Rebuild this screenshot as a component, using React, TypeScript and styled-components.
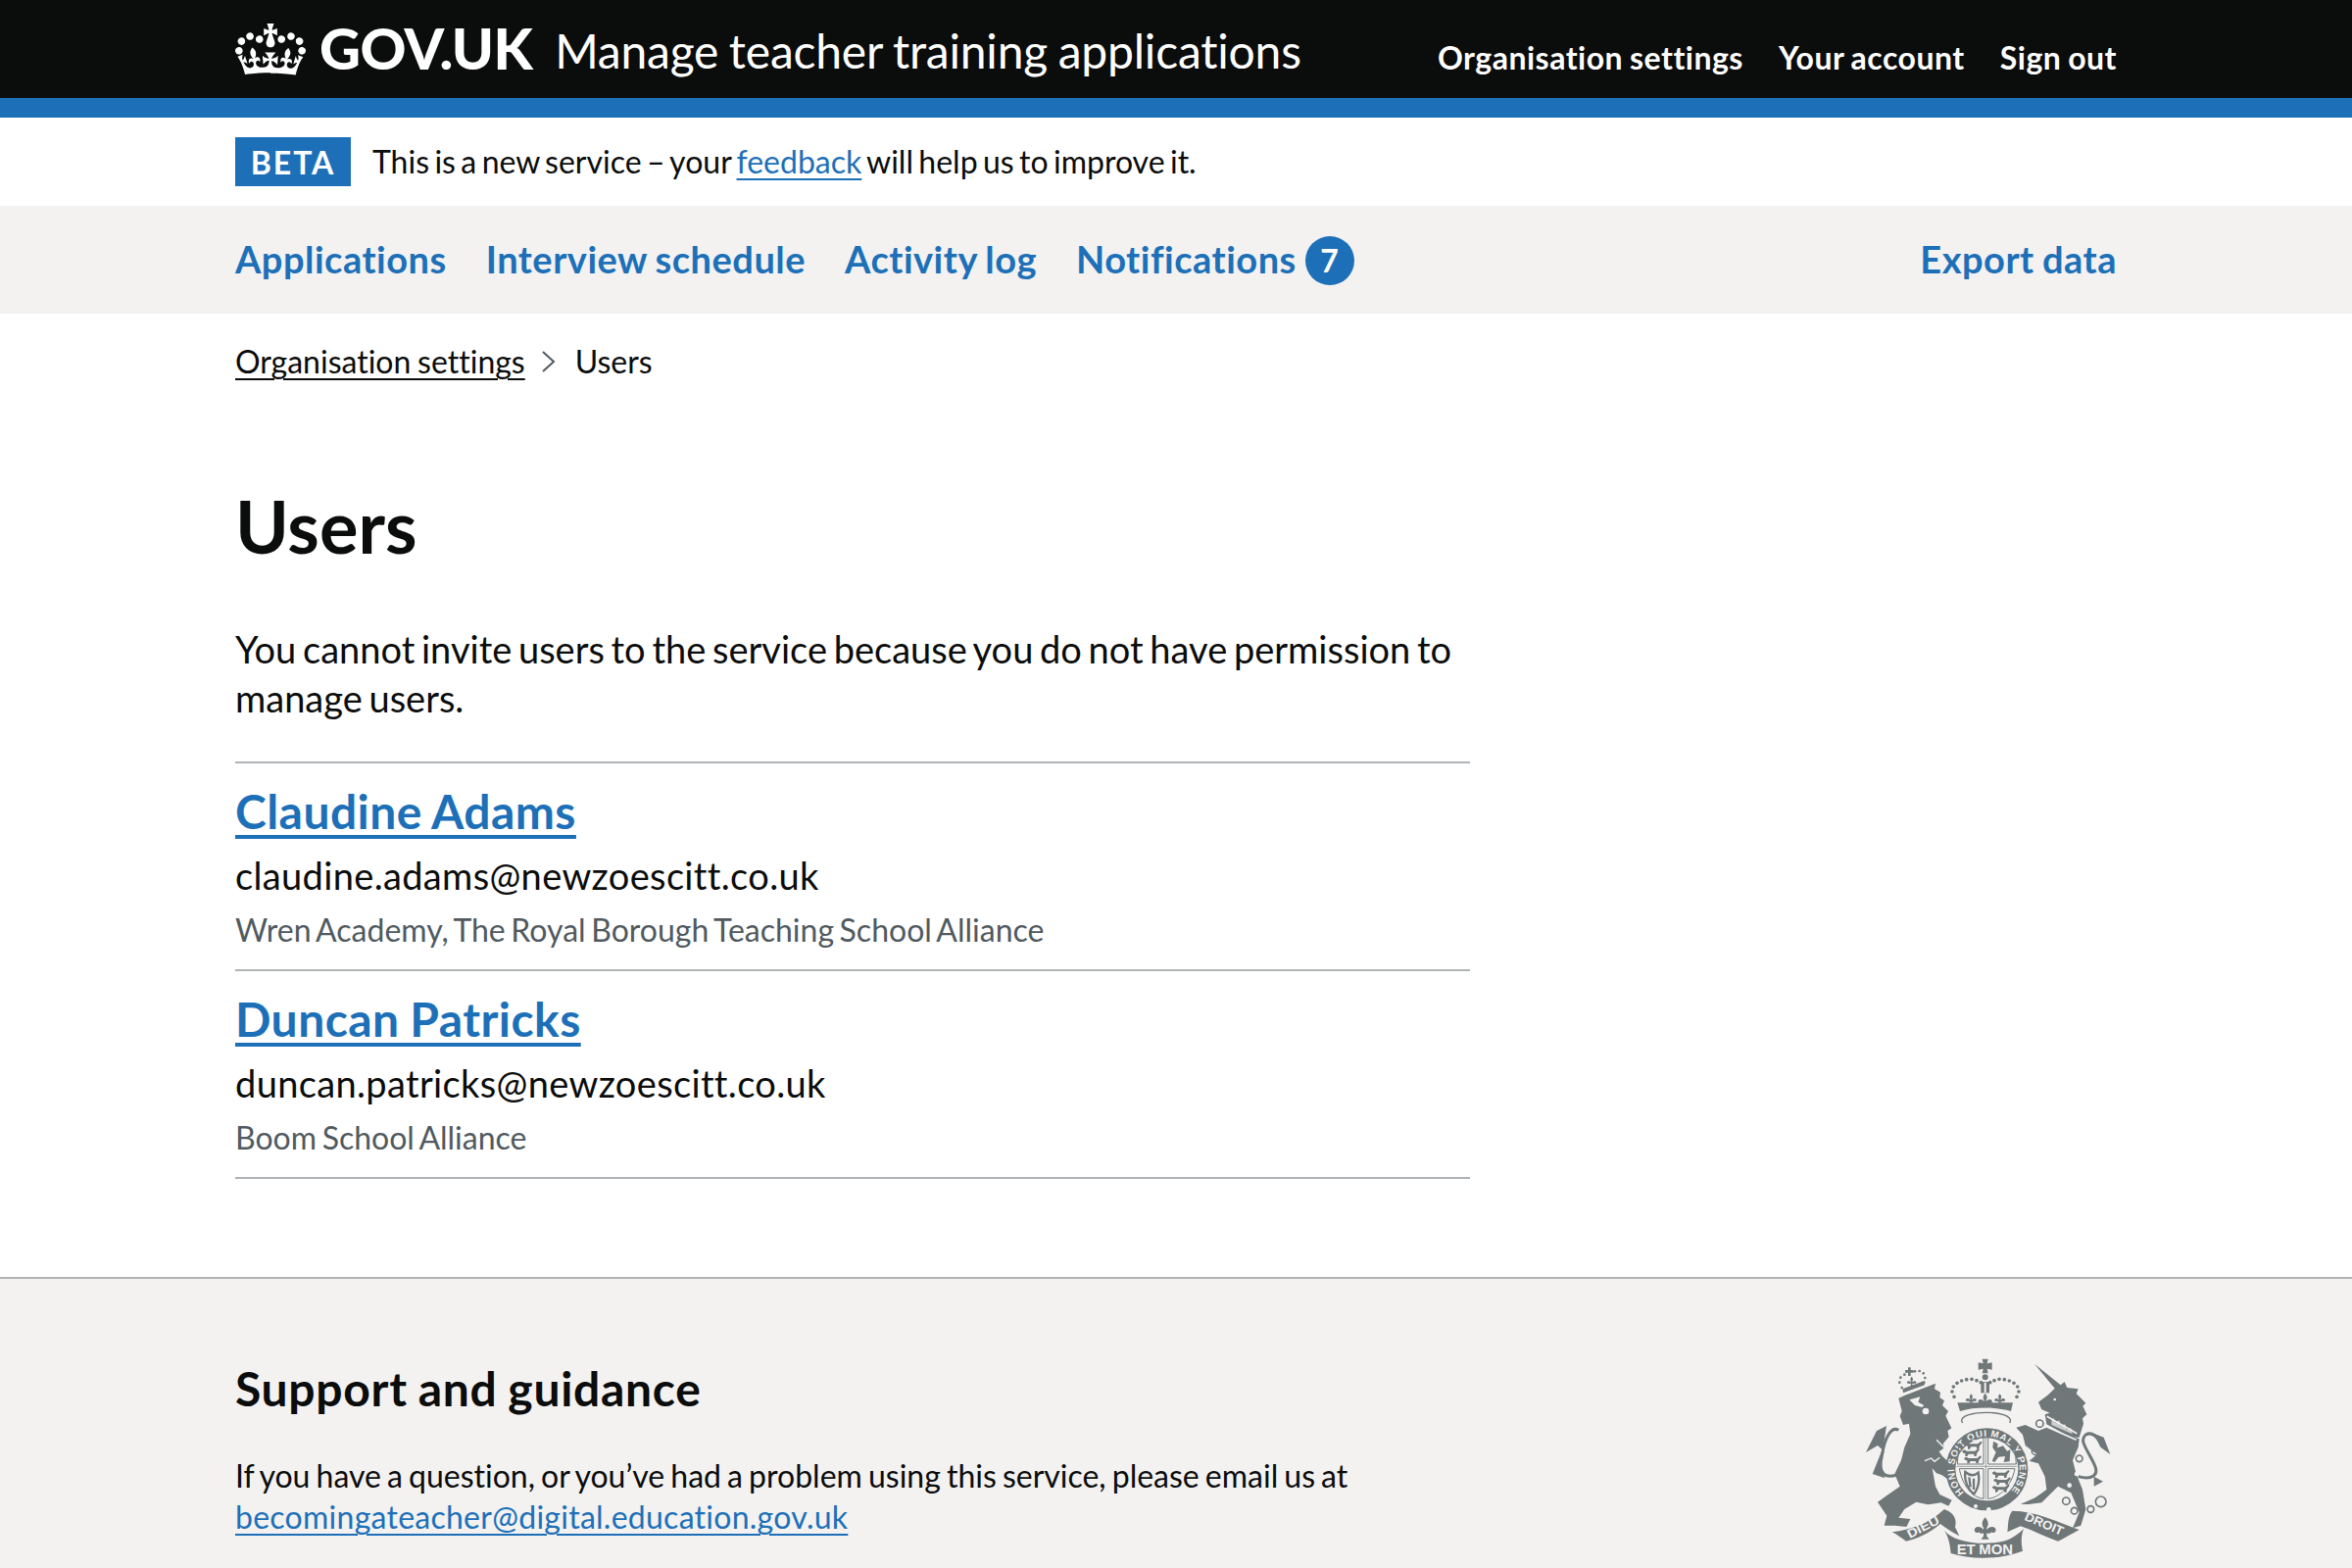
import React, { ReactElement } from 'react'
import styled, { createGlobalStyle } from 'styled-components';

const GlobalStyle = createGlobalStyle`
    html, body {
        margin : 0;
        padding : 0;
        background : white;
        color : #0b0c0c;
        font-family : Lato, "Liberation Sans", sans-serif;
        font-variant-ligatures : none;
        word-spacing : -1.44px;
    }
`;

const Page = styled.div`
    width : 2400px;
    height : 1600px;
    overflow : hidden;
`;

const Header = styled.header`
    display : flex;
    align-items : center;
    height : 100px;
    padding : 0 240px;
    background : #0b0c0c;
    border-bottom : 20px solid #1d70b8;
    color : white;
`;

const CrownIcon = styled.svg`
    width : 72px;
    height : 53px;
    fill : white;
    margin-right : 14px;
`;

const LogoText = styled.span`
    font-size : 58px;
    font-weight : 900;
    letter-spacing : -0.6px;
    margin-right : 23px;
    margin-bottom : 3px;
`;

const ServiceName = styled.span`
    flex : 1;
    padding-top : 3px;
    font-size : 48px;
    letter-spacing : -0.2px;
`;

const HeaderNav = styled.nav`
    display : flex;
    gap : 36px;
    padding-top : 16px;
`;

const HeaderLink = styled.a`
    font-size : 32px;
    font-weight : 700;
    letter-spacing : 0.5px;
`;

const PhaseBanner = styled.div`
    display : flex;
    align-items : center;
    gap : 22px;
    height : 90px;
    padding : 0 240px;
    font-size : 32px;
`;

const BannerText = styled.span`
    margin-top : -2px;
    word-spacing : -2.8px;
`;

const Tag = styled.strong`
    display : flex;
    align-items : center;
    justify-content : center;
    width : 118px;
    height : 50px;
    background : #1d70b8;
    color : white;
    font-size : 32px;
    letter-spacing : 2px;
`;

const BlueLink = styled.a`
    color : #1d70b8;
    text-decoration : underline;
    text-decoration-thickness : 2px;
    text-underline-offset : 5px;
`;

const FooterLink = styled(BlueLink)`
    display : block;
    margin-top : 2px;
    letter-spacing : 0.26px;
`;

const PrimaryNav = styled.nav`
    display : flex;
    align-items : center;
    gap : 40px;
    box-sizing : border-box;
    height : 110px;
    padding : 0 240px 3px;
    background : #f3f2f1;
`;

const NavLink = styled.a<{ $end? : boolean }>`
    display : flex;
    align-items : center;
    gap : 9px;
    color : #1d70b8;
    font-size : 38px;
    font-weight : 700;
    letter-spacing : 0.5px;
    margin-left : ${p => p.$end ? 'auto' : '0'};
`;

const Badge = styled.span`
    display : flex;
    align-items : center;
    justify-content : center;
    width : 50px;
    height : 50px;
    border-radius : 50%;
    background : #1d70b8;
    color : white;
    font-size : 32px;
    transform : translateY(2px);
`;

const Breadcrumbs = styled.div`
    display : flex;
    align-items : center;
    margin : 29px 240px 0;
    font-size : 32px;
    line-height : 40px;
`;

const CrumbLink = styled.a`
    text-decoration : underline;
    text-decoration-thickness : 2px;
    text-underline-offset : 5px;
`;

const Chevron = styled.svg`
    width : 16px;
    height : 26px;
    margin : 0 19px 0 16px;
    fill : none;
    stroke : #505a5f;
    stroke-width : 2;
`;

const Main = styled.main`
    width : 1260px;
    margin : 0 240px;
`;

const Title = styled.h1`
    margin : 108px 0 60px;
    font-size : 74px;
    line-height : 80px;
    font-weight : 700;
`;

const Lead = styled.p`
    margin : 0 0 40px;
    font-size : 38px;
    line-height : 50px;
    word-spacing : -3px;
`;

const UserList = styled.ul`
    margin : 0;
    padding : 0;
    list-style : none;
    border-top : 2px solid #b1b4b6;
`;

const UserRow = styled.li`
    padding : 19px 0 20px;
    border-bottom : 2px solid #b1b4b6;
`;

const UserName = styled.a`
    display : block;
    color : #1d70b8;
    font-size : 48px;
    line-height : 60px;
    font-weight : 700;
    letter-spacing : 0.45px;
    text-decoration : underline;
    text-decoration-thickness : 4px;
    text-underline-offset : 6px;
`;

const UserEmail = styled.div`
    margin-top : 10px;
    font-size : 38px;
    line-height : 50px;
    letter-spacing : 0.35px;
`;

const UserOrg = styled.div`
    margin-top : 11px;
    color : #505a5f;
    font-size : 32px;
    line-height : 40px;
    word-spacing : -2.6px;
`;

const Footer = styled.footer`
    display : flex;
    justify-content : space-between;
    align-items : flex-start;
    margin-top : 100px;
    padding : 55px 220px 0 240px;
    background : #f3f2f1;
    border-top : 2px solid #b1b4b6;
    height : 300px;
`;

const FooterCopy = styled.div`
    padding-top : 27px;
    font-size : 32px;
    line-height : 40px;
`;

const FooterHeading = styled.h2`
    margin : 0 0 39px;
    font-size : 48px;
    line-height : 60px;
    font-weight : 700;
    letter-spacing : 0.7px;
`;

const FooterText = styled.p`
    margin : 0;
    word-spacing : -2.1px;
`;

const ArmsSvg = styled.svg`
    flex : none;
    width : 300px;
    height : 240px;
`;

function Crown() : ReactElement {
    return (
        <CrownIcon viewBox="0 0 132 97" aria-hidden="true">
            <path d="M25 30.2c3.5 1.5 7.7-.2 9.1-3.7 1.5-3.6-.2-7.8-3.9-9.2-3.6-1.4-7.6.3-9.1 3.9-1.4 3.5.3 7.5 3.9 9zM9 39.5c3.6 1.5 7.8-.2 9.2-3.7 1.5-3.6-.2-7.8-3.9-9.1-3.6-1.5-7.6.2-9.1 3.8-1.4 3.5.3 7.5 3.8 9zM4.4 57.2c3.5 1.5 7.7-.2 9.1-3.8 1.5-3.6-.2-7.7-3.9-9.1-3.6-1.5-7.6.3-9.1 3.8-1.4 3.5.3 7.6 3.9 9.1zm38.3-21.4c3.5 1.5 7.7-.2 9.1-3.8 1.5-3.6-.2-7.7-3.9-9.1-3.6-1.4-7.6.3-9.1 3.9-1.3 3.6.4 7.7 3.9 9zm64.4-5.6c-3.6 1.5-7.8-.2-9.1-3.7-1.5-3.6.2-7.8 3.8-9.2 3.6-1.4 7.7.3 9.2 3.9 1.3 3.5-.4 7.5-3.9 9zm15.9 9.3c-3.6 1.5-7.7-.2-9.1-3.7-1.5-3.6.2-7.8 3.7-9.1 3.6-1.5 7.7.2 9.2 3.8 1.5 3.5-.3 7.5-3.8 9zm4.7 17.7c-3.6 1.5-7.8-.2-9.2-3.8-1.5-3.6.2-7.7 3.9-9.1 3.6-1.5 7.7.3 9.2 3.8 1.3 3.5-.4 7.6-3.9 9.1zM89.3 35.8c-3.6 1.5-7.8-.2-9.2-3.8-1.4-3.6.2-7.7 3.9-9.1 3.6-1.4 7.7.3 9.2 3.9 1.4 3.6-.3 7.7-3.9 9zM69.7 17.7l8.9 4.7V9.3l-8.9 2.8c-.2-.3-.5-.6-.9-.9L72.4 0H59.6l3.6 11.2c-.3.3-.6.5-.9.9l-8.8-2.8v13.1l8.8-4.7c.3.3.6.7.9.9l-5 15.4v.1c-.2.8-.4 1.6-.4 2.4 0 4.1 3.1 7.5 7 8.1h.2c.3 0 .7.1 1 .1.4 0 .7 0 1-.1h.2c4-.6 7.1-4.1 7.1-8.1 0-.8-.1-1.7-.4-2.4V34l-5.1-15.4c.4-.2.7-.6 1-.9zM66 92.8c16.9 0 32.8 1.1 47.1 3.2 4-16.9 8.9-26.7 14-33.5l-9.6-3.4c1 4.9 1.1 7.2 0 10.2-1.5-1.4-3-4.3-4.2-8.7L108.6 76c2.8-2 5-3.2 7.5-3.3-4.4 9.4-10 11.9-13.6 11.2-4.3-.8-6.3-4.6-5.6-7.9 1-4.7 5.7-5.9 8-.5 4.3-8.7-3-11.4-7.6-8.8 7.1-7.2 7.9-13.5 2.1-21.1-8 6.1-8.1 12.3-4.5 20.8-4.7-5.4-12.1-2.5-9.5 6.2 3.4-5.2 7.9-2 7.2 3.1-.6 4.3-6.4 7.8-13.5 7.2-10.3-.9-10.9-8-11.2-13 2.5-.5 7.1 1.8 11 7.3L80.2 60c-4.1 4.4-8 5.3-12.3 5.4 1.4-4.4 8-11.6 8-11.6H55.5s6.4 7.2 7.9 11.6c-4.2-.1-8-1-12.3-5.4l1.4 16.4c3.9-5.5 8.5-7.7 10.9-7.3-.3 5-.7 12.1-11 13-7.2.6-12.9-2.9-13.5-7.2-.6-5 3.8-8.3 7.1-3.1 2.7-8.7-4.6-11.6-9.4-6.2 3.7-8.5 3.6-14.7-4.6-20.8-5.8 7.6-5 13.9 2.2 21.1-4.7-2.6-11.9.1-7.7 8.8 2.3-5.5 7.1-4.2 8.1.5.7 3.3-1.3 7.1-5.7 7.9-3.5.7-9-1.8-13.5-11.2 2.5.1 4.7 1.3 7.5 3.3l-4.7-15.4c-1.2 4.4-2.7 7.2-4.3 8.7-1.1-3-.9-5.3 0-10.2l-9.5 3.4c5 6.9 9.9 16.7 14 33.5 14.8-2.1 30.8-3.2 47.7-3.2z" />
        </CrownIcon>
    )
}

const INK = '#6f7779';
const PAPER = '#f3f2f1';
const ARMS_FONT = '"Liberation Sans", sans-serif';

// beads of the big crown, left and right of the centre
const crownBeads = [
    [342, 196], [336, 180], [340, 165], [351, 154], [365, 147], [380, 143], [396, 142], [411, 146], [424, 152],
    [452, 152], [465, 146], [480, 142], [496, 143], [511, 147], [525, 154], [536, 165], [540, 180], [534, 196],
];

const lionCrownBeads = [[182, 168], [175, 152], [178, 137], [190, 128], [222, 118], [236, 117], [248, 124], [253, 138], [250, 152]];

const armsRings = [[604, 278, 11], [592, 362, 12], [725, 385, 10], [685, 515, 11], [710, 545, 10], [760, 540, 10], [791, 517, 16]];

function Fleur({ x, y, s } : { x : number, y : number, s : number }) : ReactElement {
    return (
        <path
            transform={`translate(${x} ${y}) scale(${s})`}
            d="M0 -22 C7 -14 7 -8 3 -2 L3 2 C7 -4 16 -6 20 0 C22 6 16 10 12 6 C10 9 6 10 3 8 L3 14 L8 20 L-8 20 L-3 14 L-3 8 C-6 10 -10 9 -12 6 C-16 10 -22 6 -20 0 C-16 -6 -7 -4 -3 2 L-3 -2 C-7 -8 -7 -14 0 -22 Z"
            fill={INK}
        />
    )
}

function LittleLion({ x, y } : { x : number, y : number }) : ReactElement {
    return (
        <path
            transform={`translate(${x} ${y})`}
            d="M0 4 L8 0 L14 4 L40 4 L50 -4 L54 0 L46 10 L44 20 L38 20 L36 13 L20 13 L16 20 L10 20 L10 11 L4 10 Z"
            fill={INK}
        />
    )
}

function Arms() : ReactElement {
    return (
        <ArmsSvg viewBox="0 0 900 720" aria-hidden="true">
            {/* lion */}
            <path fill={INK} d="M172 200 L190 192 L285 155 L282 172 L300 182 L298 198 L312 208 L306 222 L324 240 L316 254 L334 292 L322 300 L326 318 L308 340 L312 352 L296 364 L306 378 L330 400 L345 432 L328 452 L305 436 L288 430 L275 415 L285 470 L298 495 L335 512 L325 530 L302 520 L262 526 L226 518 L190 540 L172 566 L208 570 L196 594 L160 590 L128 590 L136 560 L108 518 L150 488 L176 470 L160 432 L180 390 L190 350 L208 310 L204 278 L186 282 L176 255 L182 240 Z" />
            <path fill={PAPER} d="M205 205 L238 196 L232 212 L250 222 L244 228 L222 222 Z" />
            <circle cx="255" cy="240" r="10" fill={PAPER} />
            <path fill="none" stroke={PAPER} strokeWidth="4" d="M288 328 L336 376 M252 392 L272 384 L282 394 L298 382" />
            <path fill="none" stroke={INK} strokeWidth="9" d="M175 432 C135 448 105 438 122 372 C130 320 150 285 172 298" />
            <path fill={INK} d="M135 285 L105 300 L72 366 L108 345 L122 358 L92 432 L130 445 L116 400 L128 330 Z" />
            {/* lion's crown */}
            <path fill={INK} d="M186 184 L252 160 L248 148 L184 172 Z" />
            <Fleur x={212} y={150} s={0.7} />
            <path fill={INK} d="M201 106 L209 106 L209 114 L218 114 L218 122 L209 122 L209 132 L201 132 L201 122 L192 122 L192 114 L201 114 Z" />
            {lionCrownBeads.map(([cx, cy]) => <circle key={cx + '-' + cy} cx={cx} cy={cy} r="4" fill={INK} />)}

            {/* unicorn */}
            <path fill={INK} d="M588 95 L668 160 L680 150 L688 168 L722 172 L716 186 L745 215 L736 224 L748 250 L735 262 L738 278 L725 320 L700 320 L625 280 L620 250 L635 245 L610 235 L600 212 L630 190 L650 170 Z" />
            <path fill={INK} d="M625 290 L725 325 L722 350 L705 390 L715 430 L735 480 L745 540 L730 590 L705 598 L725 550 L700 490 L660 470 L610 520 L570 525 L545 525 L590 505 L625 480 L620 440 L600 400 L572 392 L596 372 L560 345 L552 312 L532 290 L560 282 L600 300 Z" />
            <circle cx="650" cy="204" r="4" fill={PAPER} />
            <path fill="none" stroke={PAPER} strokeWidth="5" d="M626 256 L718 308 M626 288 L716 328" />
            <path fill={PAPER} d="M640 270 L646 260 L652 275 L664 268 L668 284 L682 280 L686 296 L700 292 L704 310 L640 282 Z" opacity="0.7" />
            <path fill="none" stroke={INK} strokeWidth="9" d="M722 440 C760 450 790 440 770 400 C745 350 725 330 745 312 C765 300 780 320 790 335" />
            <path fill={INK} d="M770 308 L800 320 L820 372 L790 350 L780 330 Z M770 440 L798 455 L770 470 Z" />
            <g fill="none" stroke={INK} strokeWidth="5">
                {armsRings.map(([cx, cy, r]) => <circle key={cx} cx={cx} cy={cy} r={r} />)}
            </g>
            <circle cx="717" cy="432" r="7" fill={PAPER} />
            <circle cx="695" cy="467" r="7" fill={PAPER} />

            {/* big crown */}
            <path fill={INK} d="M428 80 L446 80 L443 94 L458 91 L458 113 L443 110 L446 124 L428 124 L431 110 L416 113 L416 91 L431 94 Z" />
            <circle cx="437" cy="136" r="9" fill={INK} />
            <path fill={INK} d="M424 150 L450 150 L450 184 L424 184 Z" />
            <path fill={PAPER} d="M434 152 L440 152 L440 184 L434 184 Z" />
            {crownBeads.map(([cx, cy]) => <circle key={cx + '-' + cy} cx={cx} cy={cy} r="5.5" fill={INK} />)}
            <Fleur x={394} y={204} s={0.8} />
            <Fleur x={437} y={208} s={1.05} />
            <Fleur x={482} y={204} s={0.8} />
            <path fill={INK} d="M352 214 L522 214 L516 240 C470 226 405 226 360 240 Z" />
            <path fill="none" stroke={INK} strokeWidth="4" d="M368 276 C352 252 410 244 440 244 C472 244 526 252 512 276" />

            {/* garter */}
            <circle cx="442" cy="418" r="126" fill={INK} />
            <circle cx="442" cy="418" r="96" fill={PAPER} />
            <path id="garter" fill="none" d="M372 489 A100 100 0 1 1 512 489" />
            <text fontFamily={ARMS_FONT} fontWeight="700" fontSize="29" fill={PAPER}>
                <textPath href="#garter" textLength="465" lengthAdjust="spacing">HONI SOIT QUI MAL Y PENSE</textPath>
            </text>
            {/* quarters */}
            <path fill="none" stroke={INK} strokeWidth="3" d="M356 345 C385 330 410 322 432 318 L432 402 L352 402 Z M446 318 C470 322 505 332 528 345 L532 402 L446 402 Z M358 416 L432 416 L432 508 C400 505 368 470 358 416 Z M446 416 L528 416 C518 470 480 505 446 508 Z" />
            <path fill="none" stroke={INK} strokeWidth="2" d="M439 316 L439 510 M350 409 L534 409" />
            <LittleLion x={374} y={336} />
            <LittleLion x={366} y={358} />
            <LittleLion x={372} y={380} />
            <LittleLion x={458} y={424} />
            <LittleLion x={462} y={446} />
            <LittleLion x={458} y={468} />
            <path fill={INK} d="M462 332 L476 340 L474 352 L492 346 L504 362 L514 358 L512 394 L494 396 L498 378 L478 380 L466 396 L458 392 L470 366 L460 352 Z" />
            <path fill="none" stroke={INK} strokeWidth="7" d="M376 426 C372 452 385 480 402 494 C416 476 420 450 416 428 C402 440 390 438 376 426 Z M388 442 L392 472 M402 446 L402 480" />
            <path fill={INK} d="M358 506 C390 540 480 552 528 505 L516 490 C480 525 400 525 372 492 Z" />
            <circle cx="448" cy="541" r="7" fill={PAPER} />
            <circle cx="408" cy="531" r="6" fill={PAPER} />

            {/* motto */}
            <path fill={INK} d="M152 610 C200 605 265 585 312 540 C340 550 352 570 345 595 L358 622 C340 612 318 600 300 585 C265 615 230 630 195 638 C180 628 168 618 152 610 Z" />
            <path fill={INK} d="M312 605 C325 620 345 630 365 635 C405 648 470 648 510 632 C525 625 540 615 555 600 C545 625 548 650 552 668 C480 695 395 695 332 675 C330 650 325 625 312 605 Z" />
            <path fill={INK} d="M520 545 C590 545 660 580 725 603 C700 615 680 630 660 638 C620 625 585 605 545 592 L505 610 C508 590 505 565 520 545 Z" />
            <text x="350" y="678" fontFamily={ARMS_FONT} fontWeight="700" fontSize="44" fill={PAPER} textLength="172" lengthAdjust="spacingAndGlyphs">ET MON</text>
            <text x="206" y="630" fontFamily={ARMS_FONT} fontWeight="700" fontSize="38" fill={PAPER} textLength="105" lengthAdjust="spacingAndGlyphs" transform="rotate(-27 206 630)">DIEU</text>
            <text x="555" y="572" fontFamily={ARMS_FONT} fontWeight="700" fontSize="38" fill={PAPER} textLength="125" lengthAdjust="spacingAndGlyphs" transform="rotate(23 555 572)">DROIT</text>
            <Fleur x={437} y={600} s={1.6} />
        </ArmsSvg>
    )
}

const users = [
    { name : 'Claudine Adams', email : 'claudine.adams@newzoescitt.co.uk', org : 'Wren Academy, The Royal Borough Teaching School Alliance' },
    { name : 'Duncan Patricks', email : 'duncan.patricks@newzoescitt.co.uk', org : 'Boom School Alliance' },
];

function App() : ReactElement {
    return (
        <Page>
            <GlobalStyle />
            <Header>
                <Crown />
                <LogoText>GOV.UK</LogoText>
                <ServiceName>Manage teacher training applications</ServiceName>
                <HeaderNav>
                    <HeaderLink>Organisation settings</HeaderLink>
                    <HeaderLink>Your account</HeaderLink>
                    <HeaderLink>Sign out</HeaderLink>
                </HeaderNav>
            </Header>
            <PhaseBanner>
                <Tag>BETA</Tag>
                <BannerText>This is a new service – your <BlueLink>feedback</BlueLink> will help us to improve it.</BannerText>
            </PhaseBanner>
            <PrimaryNav>
                <NavLink>Applications</NavLink>
                <NavLink>Interview schedule</NavLink>
                <NavLink>Activity log</NavLink>
                <NavLink>Notifications <Badge>7</Badge></NavLink>
                <NavLink $end>Export data</NavLink>
            </PrimaryNav>
            <Breadcrumbs>
                <CrumbLink>Organisation settings</CrumbLink>
                <Chevron viewBox="0 0 16 26"><path d="M2 3 L13 13 L2 23" /></Chevron>
                <span>Users</span>
            </Breadcrumbs>
            <Main>
                <Title>Users</Title>
                <Lead>You cannot invite users to the service because you do not have permission to manage users.</Lead>
                <UserList>
                    {users.map(u => (
                        <UserRow key={u.email}>
                            <UserName>{u.name}</UserName>
                            <UserEmail>{u.email}</UserEmail>
                            <UserOrg>{u.org}</UserOrg>
                        </UserRow>
                    ))}
                </UserList>
            </Main>
            <Footer>
                <FooterCopy>
                    <FooterHeading>Support and guidance</FooterHeading>
                    <FooterText>If you have a question, or you’ve had a problem using this service, please email us at</FooterText>
                    <FooterLink>becomingateacher@digital.education.gov.uk</FooterLink>
                </FooterCopy>
                <Arms />
            </Footer>
        </Page>
    )
}

export default App
